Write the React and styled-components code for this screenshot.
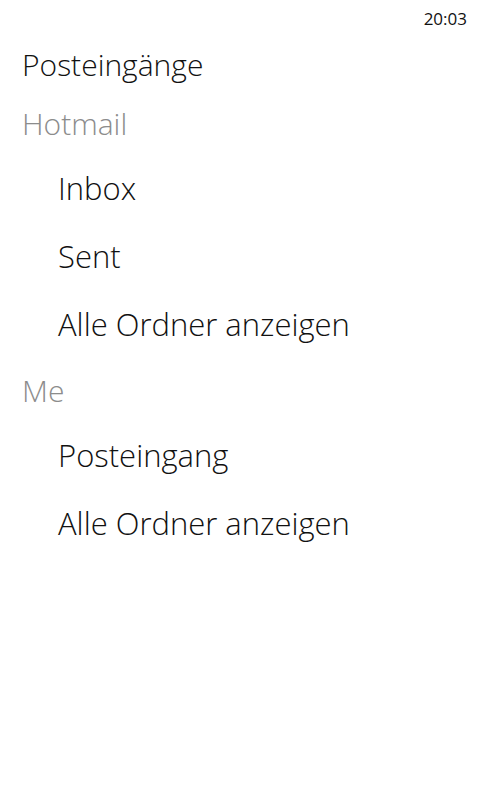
import React from 'react';
import styled, { createGlobalStyle } from 'styled-components';

const GlobalStyle = createGlobalStyle`
  html, body {
    margin: 0;
    padding: 0;
    background: #ffffff;
  }
  body {
    font-family: "Open Sans", "Noto Sans", "Liberation Sans", sans-serif;
  }
`

const Screen = styled.div`
  width: 480px;
  height: 800px;
  background: #ffffff;
  color: #111;
  display: flex;
  flex-direction: column;
`
const StatusBar = styled.div`
  height: 36px;
  display: flex;
  justify-content: flex-end;
  align-items: center;
  padding-right: 13px;
  font-size: 17px;
  font-weight: 400;
  color: #111;
`
const Title = styled.h1`
  margin: 0;
  padding-left: 22px;
  font-size: 30px;
  font-weight: 300;
  line-height: 58px;
  color: #111;
`
const Section = styled.div`
  display: flex;
  flex-direction: column;

  & + & {
    margin-top: 3px;
  }
`
const SectionHeader = styled.div`
  padding-left: 22px;
  font-size: 30px;
  font-weight: 300;
  line-height: 60px;
  color: #8c8c8c;
`
const Item = styled.div`
  padding-left: 58px;
  font-size: 31px;
  font-weight: 300;
  line-height: 68px;
  color: #111;
`

const accounts = [
  { name: 'Hotmail', folders: ['Inbox', 'Sent', 'Alle Ordner anzeigen'] },
  { name: 'Me', folders: ['Posteingang', 'Alle Ordner anzeigen'] },
];

export default class App extends React.Component {
  render() {
    return (
      <Screen>
        <GlobalStyle />
        <StatusBar>20:03</StatusBar>
        <Title>Posteingänge</Title>
        { accounts.map((account, i) => (
          <Section key={i}>
            <SectionHeader>{ account.name }</SectionHeader>
            { account.folders.map((folder, j) => (
              <Item key={j}>{ folder }</Item>
            )) }
          </Section>
        )) }
      </Screen>
    );
  }
}
